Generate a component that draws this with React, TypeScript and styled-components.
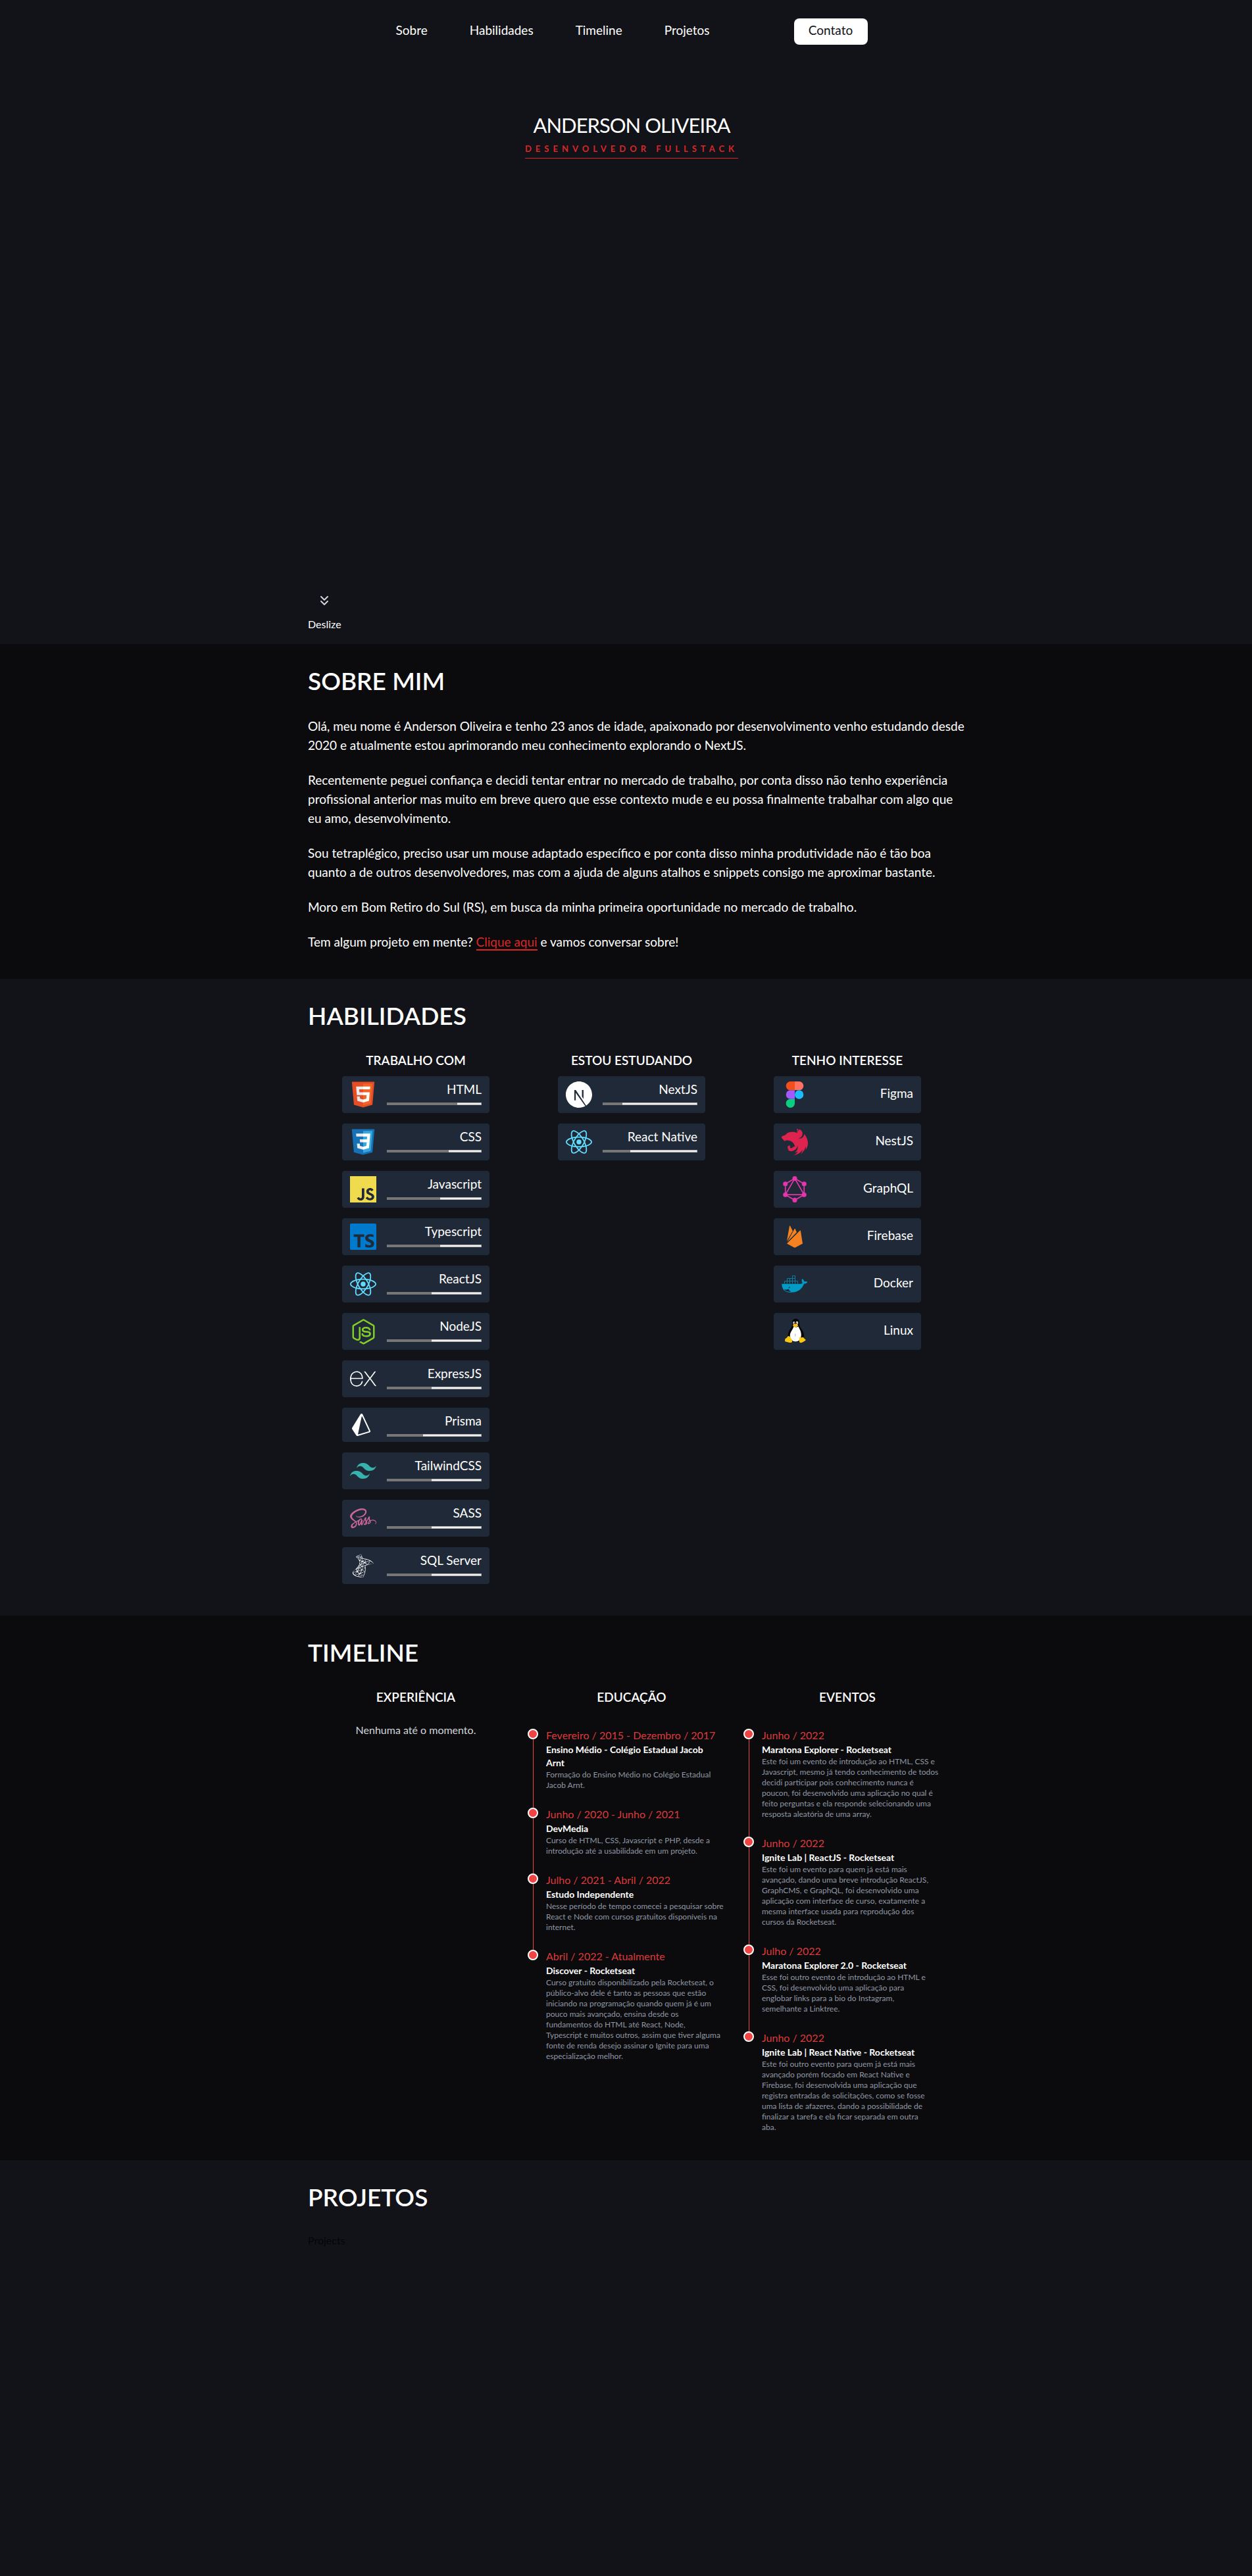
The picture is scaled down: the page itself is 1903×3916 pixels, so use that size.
import React from "react";
import styled, { createGlobalStyle, css } from "styled-components";
import { SiJavascript, SiTypescript, SiReact, SiExpress, SiPrisma, SiTailwindcss, SiNestjs, SiGraphql } from "react-icons/si";
import { FaNodeJs, FaSass } from "react-icons/fa";
import { DiMsqlServer } from "react-icons/di";
import { ChevronsDown } from "lucide-react";

const GlobalStyle = createGlobalStyle`
  *, *::before, *::after { box-sizing: border-box; }
  body {
    margin: 0;
    background: #121318;
    color: #ffffff;
    font-family: Lato, "Open Sans", sans-serif;
    font-size: 16px;
    line-height: 24px;
  }
  h1, h2, h3, p, ul, ol { margin: 0; padding: 0; }
  ul, ol { list-style: none; }
  a { color: inherit; text-decoration: none; }
`;

const Page = styled.div`
  display: flex;
  flex-direction: column;
  min-height: 100vh;
`;

const Band = styled.section<{ $dark?: boolean; $grow?: boolean }>`
  padding: 36px 0 42px 17px;
  background: ${(p) => (p.$dark ? "#0b0b0d" : "#121318")};
  ${(p) => p.$grow && css`flex: 1;`}
`;

const Container = styled.div`
  width: 100%;
  max-width: 984px;
  margin: 0 auto;
`;

const Hero = styled.header`
  display: flex;
  flex-direction: column;
  min-height: 979px;
  padding: 28px 0 18px 17px;
`;

const Nav = styled.nav`
  display: flex;
  align-items: center;
  justify-content: center;
  gap: 64px;
`;

const NavLink = styled.a`
  padding-bottom: 4px;
  font-size: 19px;
  line-height: 28px;
`;

const ContactButton = styled.button`
  width: 112px;
  height: 40px;
  margin-left: 64px;
  padding: 0 0 4px;
  border: 0;
  border-radius: 8px;
  background: #ffffff;
  color: #121318;
  font: inherit;
  font-size: 19px;
`;

const Intro = styled.div`
  display: flex;
  flex-direction: column;
  align-items: center;
  margin-top: 104px;
`;

const Name = styled.h1`
  font-size: 31px;
  font-weight: 400;
  line-height: 36px;
  letter-spacing: -1px;
  text-transform: uppercase;
`;

const Role = styled.p`
  margin-top: 8px;
  padding-bottom: 4px;
  border-bottom: 1px solid #dc2626;
  color: #dc2626;
  font-size: 13px;
  font-weight: 700;
  line-height: 20px;
  letter-spacing: 6px;
  text-transform: uppercase;
`;

const ScrollHint = styled(Container)`
  display: flex;
  margin-top: auto;
`;

const ScrollLink = styled.a`
  display: flex;
  flex-direction: column;
  align-items: center;
  gap: 12px;
`;

const Heading = styled.h2`
  margin-bottom: 34px;
  font-size: 37px;
  font-weight: 600;
  line-height: 40px;
  text-transform: uppercase;
`;

const About = styled.div`
  display: flex;
  flex-direction: column;
  gap: 24px;
  margin-right: -40px;
  font-size: 19px;
  line-height: 29px;
  white-space: pre-line;
`;

const TextLink = styled.a`
  border-bottom: 2px solid #dc2626;
  color: #dc2626;
`;

const Columns = styled.div`
  display: grid;
  grid-template-columns: repeat(3, 1fr);
`;

const ColumnTitle = styled.h3`
  font-size: 19px;
  font-weight: 600;
  line-height: 28px;
  text-align: center;
  text-transform: uppercase;
`;

const CardList = styled.ul`
  display: flex;
  flex-direction: column;
  align-items: center;
  gap: 16px;
  margin: 10px 0 6px;
`;

const Card = styled.li<{ $centered?: boolean }>`
  display: flex;
  align-items: ${(p) => (p.$centered ? "center" : "flex-start")};
  gap: 16px;
  width: 224px;
  padding: 8px 12px;
  border-radius: 4px;
  background: #1f2937;
`;

const IconBox = styled.span<{ $short?: boolean }>`
  display: flex;
  align-items: center;
  justify-content: ${(p) => (p.$short ? "flex-start" : "center")};
  width: 40px;
  height: ${(p) => (p.$short ? 36 : 40)}px;

  & > svg { flex-shrink: 0; }
`;

const SkillInfo = styled.div`
  display: flex;
  flex: 1;
  flex-direction: column;
  gap: 4px;
`;

const SkillName = styled.label`
  padding-bottom: 4px;
  font-size: 19px;
  line-height: 24px;
  text-align: right;
`;

const Level = styled.progress`
  display: block;
  width: 100%;
  height: 4px;
  border: 0;
  border-radius: 1px;
  overflow: hidden;
  appearance: none;

  &::-webkit-progress-bar {
    border-radius: 1px;
    background: #efefef;
    box-shadow: inset 0 0 0 1px #b2b2b2;
  }
  &::-webkit-progress-value {
    background: #767676;
  }
`;

const Empty = styled.p`
  margin-top: 24px;
  color: #d1d5db;
  text-align: center;
`;

const Events = styled.ol`
  margin-top: 32px;
  padding-left: 6px;
`;

const Event = styled.li`
  display: flex;
  gap: 12px;

  &:last-child > span::after { display: none; }
  &:last-child > div { padding-bottom: 0; }
`;

const Marker = styled.span`
  display: flex;
  flex-direction: column;
  align-items: center;
  width: 16px;
  margin: 2px 0 -2px;

  &::before {
    content: "";
    width: 16px;
    height: 16px;
    border: 2px solid #ffffff;
    border-radius: 50%;
    background: #ef4444;
  }
  &::after {
    content: "";
    flex: 1;
    width: 1px;
    background: #ef4444;
  }
`;

const EventBody = styled.div`
  flex: 1;
  padding-bottom: 24px;
  white-space: pre-line;
`;

const EventDate = styled.p`
  color: #dc3a3a;
`;

const EventTitle = styled.p`
  font-size: 14px;
  font-weight: 700;
  line-height: 20px;
`;

const EventText = styled.p`
  color: #9097a4;
  font-size: 12px;
  line-height: 16px;
`;

const ProjectsNote = styled.p`
  color: #050506;
`;

const Html5 = () => (
  <svg width="40" height="40" viewBox="0 0 128 128" aria-hidden="true">
    <path fill="#E44D26" d="M19.037 113.876L9.032 1.661h109.936l-10.016 112.198-45.019 12.48z" />
    <path fill="#F16529" d="M64 116.8l36.378-10.086 8.559-95.878H64z" />
    <path fill="#EBEBEB" d="M64 52.455H45.788L44.53 38.361H64V24.599H29.489l.33 3.692 3.382 37.927H64zm0 35.743l-.061.017-15.327-4.14-.979-10.975H33.816l1.928 21.609 28.193 7.826.063-.017z" />
    <path fill="#fff" d="M63.952 52.455v13.763h16.947l-1.597 17.849-15.35 4.143v14.319l28.215-7.82.207-2.325 3.234-36.233.335-3.696h-3.708zm0-27.856v13.762h33.244l.276-3.092.628-6.978.329-3.692z" />
  </svg>
);

const Css3 = () => (
  <svg width="40" height="40" viewBox="0 0 128 128" aria-hidden="true">
    <path fill="#1572B6" d="M18.814 114.123L8.76 1.352h110.48l-10.064 112.754-45.243 12.543-45.119-12.526z" />
    <path fill="#33A9DC" d="M64.001 117.062l36.559-10.136 8.601-96.354h-45.16v106.49z" />
    <path fill="#fff" d="M64.001 51.429h18.302l1.264-14.163H64.001V23.435h34.682l-.332 3.711-3.4 38.114h-30.95V51.429z" />
    <path fill="#EBEBEB" d="M64.083 87.349l-.061.018-15.403-4.159-.985-11.031H33.752l1.937 21.717 28.331 7.863.063-.018v-14.39z" />
    <path fill="#fff" d="M81.127 64.675l-1.666 18.522-15.426 4.164v14.39l28.354-7.858.208-2.337 2.406-26.881H81.127z" />
    <path fill="#EBEBEB" d="M64.048 23.435v13.831H30.64l-.277-3.108-.63-7.012-.331-3.711h34.646zm-.047 27.996v13.831H48.792l-.277-3.108-.631-7.012-.33-3.711h16.447z" />
  </svg>
);

const NextLogo = () => (
  <svg width="40" height="40" viewBox="0 0 128 128" aria-hidden="true">
    <path fill="#fff" d="M64 0C28.7 0 0 28.7 0 64s28.7 64 64 64c11.2 0 21.7-2.9 30.8-7.9L48.4 55.3v36.6h-6.8V41.8h6.8l50.5 75.8C116.4 106.2 128 86.5 128 64c0-35.3-28.7-64-64-64zm22.1 84.6l-7.5-11.3V41.8h7.5v42.8z" />
  </svg>
);

const Figma = () => (
  <svg width="40" height="40" viewBox="0 0 120 120" aria-hidden="true">
    <path fill="#0acf83" d="M40 120c11 0 20-9 20-20V80H40a20 20 0 0 0 0 40z" />
    <path fill="#a259ff" d="M20 60a20 20 0 0 1 20-20h20v40H40a20 20 0 0 1-20-20z" />
    <path fill="#f24e1e" d="M20 20A20 20 0 0 1 40 0h20v40H40a20 20 0 0 1-20-20z" />
    <path fill="#ff7262" d="M60 0h20a20 20 0 0 1 0 40H60z" />
    <circle fill="#1abcfe" cx="80" cy="60" r="20" />
  </svg>
);

const Firebase = () => (
  <svg width="40" height="40" viewBox="0 0 40 40" fill="#f58220" aria-hidden="true">
    <path d="M8 26.6L12 3.8q.5-1 1.1 0l3.8 7.4z" />
    <path d="M8.6 28L19.6 8.2q.5-.8 1 0l2.4 5z" />
    <path d="M8 30.6L27.8 10.7q.8-.7 1.1.4L32 30.4l-11.2 6q-.8.4-1.6 0z" />
  </svg>
);

const Docker = () => (
  <svg width="40" height="40" viewBox="0 0 40 40" aria-hidden="true">
    <path fill="none" stroke="#0b7c9e" d="M4.5 19.5v-4h20v4M8.5 19.500v-8h12v8M12.500 11.500v8M16.500 19.500v-12h4v4" />
    <path fill="#019bc6" d="M.3 19.7 H27 C29.2 19.7 31 19.4 32 18.5 C30.4 16.7 30 14.1 31.4 12 C33.1 13 34.1 14.4 34.4 16.2 C36 15.7 38.1 15.9 39.4 16.8 C38.6 18.700 36.600 19.600 34.200 19.600 C31 28.500 24 32.800 14.500 32.800 C5 32.800 .3 28 .3 19.700 Z" />
    <path fill="#1f2937" d="M3.4 28.3 C6 28.900 8.600 28.500 10.800 27.500 C11.400 29.300 12.600 30.700 14.400 31.700 C10.400 32.300 6.200 31.300 3.400 28.300 Z" />
    <circle fill="#1f2937" cx="11.7" cy="25.2" r=".9" />
  </svg>
);

const Tux = () => (
  <svg width="40" height="40" viewBox="0 0 40 40" aria-hidden="true">
    <path fill="#050505" d="M21.5.7c-3.8 0-5.6 2.6-5.5 6.2.1 3.6.1 5-1.6 7.6-2.4 3.6-5 8-5 12.5l3 9h18l3.6-8c.3-5.5-1.6-9-4.4-12.6C27.4 12.8 27 11 27 7.4 26.9 3 25.2.7 21.5.7z" />
    <path fill="#fff" d="M18.5 12.5c2 1.5 5 1.5 7 0 1.2 3.5 4.3 6.5 4.3 12.5 0 6-3 10.5-8.5 10.5S12.5 31 12.8 25.5c.3-4.5 3.6-7 5.7-13z" />
    <path fill="#b9b9b9" d="M21 22.500c-1 2-1.200 4-.2 5.800.8-1.600.8-4 .2-5.800z" />
    <ellipse fill="#fff" cx="18.8" cy="7" rx="1.5" ry="2" />
    <ellipse fill="#fff" cx="23.4" cy="7" rx="1.8" ry="2.2" />
    <circle fill="#050505" cx="19.2" cy="7.3" r=".8" />
    <circle fill="#050505" cx="23" cy="7.3" r=".9" />
    <path fill="#f8bf11" d="M17 10.2c1.5-2.2 6.2-2.4 8.2 0-.6 2.4-2.6 3.6-4.2 3.6s-3.6-1.6-4-3.6z" />
    <path fill="#fdc70f" d="M5.6 31c1.8-.4 2.6-1.8 4.2-3.8 2.2-.6 3.6 1.8 5 4.4 1 2 2.4 3.8.6 5-2.2 1.4-6-.6-9.6-1.2-1.4-.4-.6-2.6-.2-4.4z" />
    <path fill="#fdc70f" d="M27.4 28.5c1.4.8 3.6 1.4 5.2 0 1 1.6 2 2.6 3.8 3.8.8 1-.4 2-2.4 3-2 1.2-4 2.6-6 1.6-2.2-1.4-1.2-5-.6-8.400z" />
  </svg>
);

type Skill = { name: string; icon: React.ReactNode; level?: number; short?: boolean };

const skills: { title: string; items: Skill[] }[] = [
  {
    title: "Trabalho com",
    items: [
      { name: "HTML", icon: <Html5 />, level: 74 },
      { name: "CSS", icon: <Css3 />, level: 65 },
      { name: "Javascript", icon: <SiJavascript size={40} color="#f0db4f" />, level: 56 },
      { name: "Typescript", icon: <SiTypescript size={40} color="#007acc" />, level: 56 },
      { name: "ReactJS", icon: <SiReact size={40} color="#61dafb" />, level: 47 },
      { name: "NodeJS", icon: <FaNodeJs size={39} color="#83cd29" />, level: 47 },
      { name: "ExpressJS", icon: <SiExpress size={40} />, level: 47 },
      { name: "Prisma", icon: <SiPrisma size={34} />, level: 38, short: true },
      { name: "TailwindCSS", icon: <SiTailwindcss size={40} color="#38b2ac" />, level: 47 },
      { name: "SASS", icon: <FaSass size={40} color="#cb6699" />, level: 47 },
      { name: "SQL Server", icon: <DiMsqlServer size={48} />, level: 47 },
    ],
  },
  {
    title: "Estou estudando",
    items: [
      { name: "NextJS", icon: <NextLogo />, level: 21 },
      { name: "React Native", icon: <SiReact size={40} color="#61dafb" />, level: 29 },
    ],
  },
  {
    title: "Tenho interesse",
    items: [
      { name: "Figma", icon: <Figma /> },
      { name: "NestJS", icon: <SiNestjs size={40} color="#df234f" /> },
      { name: "GraphQL", icon: <SiGraphql size={40} color="#e535ab" /> },
      { name: "Firebase", icon: <Firebase /> },
      { name: "Docker", icon: <Docker /> },
      { name: "Linux", icon: <Tux /> },
    ],
  },
];

type Entry = { date: string; title: string; text: string };

const education: Entry[] = [
  {
    date: "Fevereiro / 2015 - Dezembro / 2017",
    title: "Ensino Médio - Colégio Estadual Jacob\nArnt",
    text: "Formação do Ensino Médio no Colégio Estadual\nJacob Arnt.",
  },
  {
    date: "Junho / 2020 - Junho / 2021",
    title: "DevMedia",
    text: "Curso de HTML, CSS, Javascript e PHP, desde a\nintrodução até a usabilidade em um projeto.",
  },
  {
    date: "Julho / 2021 - Abril / 2022",
    title: "Estudo Independente",
    text: "Nesse período de tempo comecei a pesquisar sobre\nReact e Node com cursos gratuitos disponíveis na\ninternet.",
  },
  {
    date: "Abril / 2022 - Atualmente",
    title: "Discover - Rocketseat",
    text: "Curso gratuito disponibilizado pela Rocketseat, o\npúblico-alvo dele é tanto as pessoas que estão\niniciando na programação quando quem já é um\npouco mais avançado, ensina desde os\nfundamentos do HTML até React, Node,\nTypescript e muitos outros, assim que tiver alguma\nfonte de renda desejo assinar o Ignite para uma\nespecialização melhor.",
  },
];

const events: Entry[] = [
  {
    date: "Junho / 2022",
    title: "Maratona Explorer - Rocketseat",
    text: "Este foi um evento de introdução ao HTML, CSS e\nJavascript, mesmo já tendo conhecimento de todos\ndecidi participar pois conhecimento nunca é\npoucon, foi desenvolvido uma aplicação no qual é\nfeito perguntas e ela responde selecionando uma\nresposta aleatória de uma array.",
  },
  {
    date: "Junho / 2022",
    title: "Ignite Lab | ReactJS - Rocketseat",
    text: "Este foi um evento para quem já está mais\navançado, dando uma breve introdução ReactJS,\nGraphCMS, e GraphQL, foi desenvolvido uma\naplicação com interface de curso, exatamente a\nmesma interface usada para reprodução dos\ncursos da Rocketseat.",
  },
  {
    date: "Julho / 2022",
    title: "Maratona Explorer 2.0 - Rocketseat",
    text: "Esse foi outro evento de introdução ao HTML e\nCSS, foi desenvolvido uma aplicação para\nenglobar links para a bio do Instagram,\nsemelhante a Linktree.",
  },
  {
    date: "Junho / 2022",
    title: "Ignite Lab | React Native - Rocketseat",
    text: "Este foi outro evento para quem já está mais\navançado porém focado em React Native e\nFirebase, foi desenvolvida uma aplicação que\nregistra entradas de solicitações, como se fosse\numa lista de afazeres, dando a possibilidade de\nfinalizar a tarefa e ela ficar separada em outra\naba.",
  },
];

const aboutTexts = [
  "Olá, meu nome é Anderson Oliveira e tenho 23 anos de idade, apaixonado por desenvolvimento venho estudando desde\n2020 e atualmente estou aprimorando meu conhecimento explorando o NextJS.",
  "Recentemente peguei confiança e decidi tentar entrar no mercado de trabalho, por conta disso não tenho experiência\nprofissional anterior mas muito em breve quero que esse contexto mude e eu possa finalmente trabalhar com algo que\neu amo, desenvolvimento.",
  "Sou tetraplégico, preciso usar um mouse adaptado específico e por conta disso minha produtividade não é tão boa\nquanto a de outros desenvolvedores, mas com a ajuda de alguns atalhos e snippets consigo me aproximar bastante.",
  "Moro em Bom Retiro do Sul (RS), em busca da minha primeira oportunidade no mercado de trabalho.",
];

const SkillCard = ({ name, icon, level, short }: Skill) => {
  const id = "level-" + name.toLowerCase().replace(" ", "-");
  return (
    <Card $centered={level === undefined}>
      <IconBox $short={short}>{icon}</IconBox>
      <SkillInfo>
        {level === undefined ? (
          <SkillName as="span">{name}</SkillName>
        ) : (
          <>
            <SkillName htmlFor={id}>{name}</SkillName>
            <Level id={id} value={level} max={100} />
          </>
        )}
      </SkillInfo>
    </Card>
  );
};

const EventColumn = ({ title, entries }: { title: string; entries: Entry[] }) => (
  <div>
    <ColumnTitle>{title}</ColumnTitle>
    <Events>
      {entries.map((entry) => (
        <Event key={entry.title}>
          <Marker />
          <EventBody>
            <EventDate>{entry.date}</EventDate>
            <EventTitle>{entry.title}</EventTitle>
            <EventText>{entry.text}</EventText>
          </EventBody>
        </Event>
      ))}
    </Events>
  </div>
);

export default function App() {
  return (
    <Page>
      <GlobalStyle />
      <Hero>
        <Nav>
          <NavLink href="#sobre">Sobre</NavLink>
          <NavLink href="#habilidades">Habilidades</NavLink>
          <NavLink href="#timeline">Timeline</NavLink>
          <NavLink href="#projetos">Projetos</NavLink>
          <ContactButton type="button">Contato</ContactButton>
        </Nav>
        <Intro>
          <Name>Anderson Oliveira</Name>
          <Role>Desenvolvedor Fullstack</Role>
        </Intro>
        <ScrollHint>
          <ScrollLink href="#sobre">
            <ChevronsDown size={24} color="#d1d5db" aria-hidden="true" />
            Deslize
          </ScrollLink>
        </ScrollHint>
      </Hero>

      <Band id="sobre" $dark>
        <Container>
          <Heading>Sobre mim</Heading>
          <About>
            {aboutTexts.map((text) => (
              <p key={text}>{text}</p>
            ))}
            <p>
              Tem algum projeto em mente? <TextLink href="#contato">Clique aqui</TextLink> e vamos conversar sobre!
            </p>
          </About>
        </Container>
      </Band>

      <Band id="habilidades">
        <Container>
          <Heading>Habilidades</Heading>
          <Columns>
            {skills.map((group) => (
              <div key={group.title}>
                <ColumnTitle>{group.title}</ColumnTitle>
                <CardList>
                  {group.items.map((item) => (
                    <SkillCard key={item.name} {...item} />
                  ))}
                </CardList>
              </div>
            ))}
          </Columns>
        </Container>
      </Band>

      <Band id="timeline" $dark>
        <Container>
          <Heading>Timeline</Heading>
          <Columns>
            <div>
              <ColumnTitle>Experiência</ColumnTitle>
              <Empty>Nenhuma até o momento.</Empty>
            </div>
            <EventColumn title="Educação" entries={education} />
            <EventColumn title="Eventos" entries={events} />
          </Columns>
        </Container>
      </Band>

      <Band id="projetos" $grow>
        <Container>
          <Heading>Projetos</Heading>
          <ProjectsNote>Projects</ProjectsNote>
        </Container>
      </Band>
    </Page>
  );
}
